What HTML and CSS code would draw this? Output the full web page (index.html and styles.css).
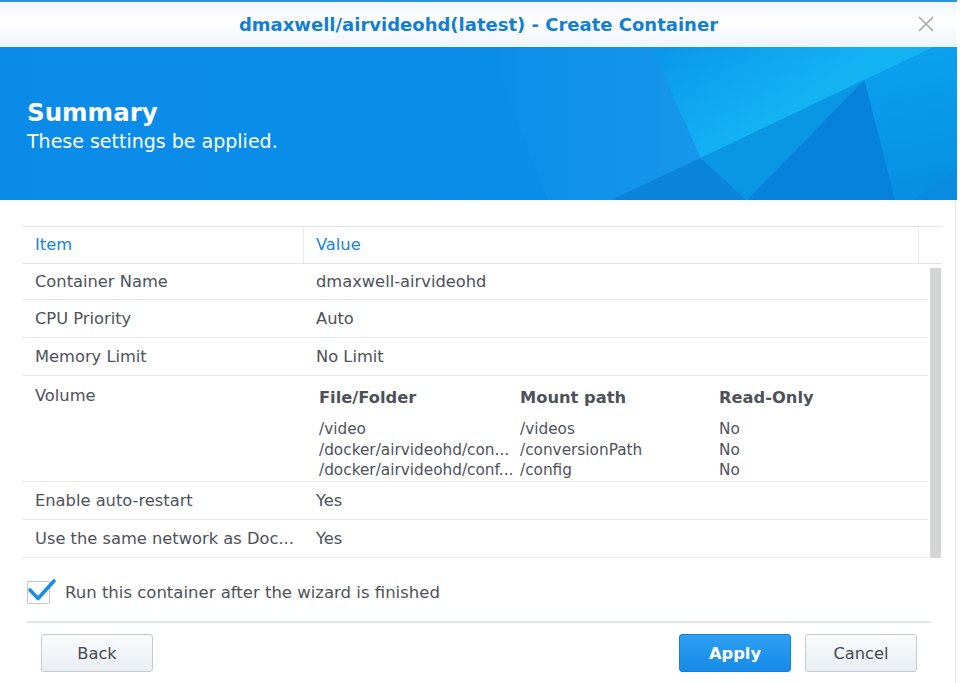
FILE: index.html
```html
<!DOCTYPE html>
<html lang="en">
<head>
<meta charset="utf-8">
<title>Create Container</title>
<link rel="stylesheet" href="styles.css">
</head>
<body>
<div class="dialog">
  <div class="topline"></div>
  <header class="titlebar">
    <h1 class="title">dmaxwell/airvideohd(latest) - Create Container</h1>
    <span class="close" aria-label="Close">
      <svg width="18" height="18" viewBox="0 0 18 18"><path d="M2 2 L16 16 M16 2 L2 16" stroke="#a3a7ab" stroke-width="1.6" fill="none"/></svg>
    </span>
  </header>
  <section class="banner">
    <svg class="banner-bg" viewBox="0 0 960 153" preserveAspectRatio="none">
      <defs>
        <linearGradient id="gBase" x1="0" y1="0" x2="1" y2="0">
          <stop offset="0" stop-color="#0a8be8"/>
          <stop offset="0.55" stop-color="#0a8fe9"/>
          <stop offset="1" stop-color="#0b95ea"/>
        </linearGradient>
        <linearGradient id="gCyan" x1="653" y1="0" x2="720" y2="105" gradientUnits="userSpaceOnUse">
          <stop offset="0" stop-color="#0b96ea"/>
          <stop offset="1" stop-color="#13b2f3"/>
        </linearGradient>
        <linearGradient id="gTopR" x1="900" y1="0" x2="930" y2="140" gradientUnits="userSpaceOnUse">
          <stop offset="0" stop-color="#0aa2ee"/>
          <stop offset="1" stop-color="#0890e2"/>
        </linearGradient>
        <linearGradient id="gSheen" x1="0" y1="0" x2="1" y2="0">
          <stop offset="0" stop-color="#ffffff" stop-opacity="0"/>
          <stop offset="1" stop-color="#ffffff" stop-opacity="0.05"/>
        </linearGradient>
      </defs>
      <rect x="0" y="0" width="960" height="153" fill="url(#gBase)"/>
      <polygon points="490,0 653,0 703,111 613,153 550,153" fill="url(#gSheen)"/>
      <polygon points="653,0 937,0 703,111" fill="url(#gCyan)"/>
      <polygon points="937,0 960,0 960,153 898,153 867,33" fill="url(#gTopR)"/>
      <polygon points="703,111 867,33 748,153" fill="#0996e3"/>
      <polygon points="613,153 703,111 748,153" fill="#0a85da"/>
      <polygon points="867,33 750,153 898,153" fill="#0682da"/>
      <polygon points="960,120 960,153 915,153" fill="#0a8add" opacity="0.6"/>
    </svg>
    <div class="banner-text">
      <h2 class="banner-title">Summary</h2>
      <p class="banner-sub">These settings be applied.</p>
    </div>
  </section>
  <main class="content">
    <div class="grid">
      <div class="ghead">
        <div class="hc hc-item">Item</div>
        <div class="hc hc-value">Value</div>
        <div class="hc hc-pad"></div>
      </div>
      <div class="gbody">
        <div class="rows">
          <div class="row row-first"><div class="k">Container Name</div><div class="v">dmaxwell-airvideohd</div></div>
          <div class="row"><div class="k">CPU Priority</div><div class="v">Auto</div></div>
          <div class="row"><div class="k">Memory Limit</div><div class="v">No Limit</div></div>
          <div class="row row-volume">
            <div class="k">Volume</div>
            <div class="vol">
              <div class="vol-head">File/Folder</div>
              <div class="vol-head">Mount path</div>
              <div class="vol-head">Read-Only</div>
              <div class="vol-cell">/video</div>
              <div class="vol-cell">/videos</div>
              <div class="vol-cell">No</div>
              <div class="vol-cell">/docker/airvideohd/con...</div>
              <div class="vol-cell">/conversionPath</div>
              <div class="vol-cell">No</div>
              <div class="vol-cell">/docker/airvideohd/conf...</div>
              <div class="vol-cell">/config</div>
              <div class="vol-cell">No</div>
            </div>
          </div>
          <div class="row"><div class="k">Enable auto-restart</div><div class="v">Yes</div></div>
          <div class="row"><div class="k">Use the same network as Doc...</div><div class="v">Yes</div></div>
        </div>
        <div class="scrollbar"></div>
      </div>
    </div>
    <label class="check">
      <span class="box">
        <svg class="tick" width="30" height="26" viewBox="0 0 30 26"><path d="M3 12 L11 20.5 L27 3" stroke="#1a8ee4" stroke-width="3.6" fill="none" stroke-linecap="round" stroke-linejoin="round"/></svg>
      </span>
      <span class="check-label">Run this container after the wizard is finished</span>
    </label>
    <div class="sep"></div>
    <footer class="buttons">
      <button class="btn">Back</button>
      <span class="spacer"></span>
      <button class="btn btn-primary">Apply</button>
      <button class="btn">Cancel</button>
    </footer>
  </main>
</div>
</body>
</html>
```

FILE: styles.css
```css
* { box-sizing: border-box; }
html, body { margin: 0; padding: 0; background: #ffffff; }
body {
  width: 960px;
  height: 683px;
  overflow: hidden;
  font-family: "DejaVu Sans", Verdana, sans-serif;
  color: #4d525a;
}
.dialog { width: 957px; }
.topline { height: 2px; background: #2a93e6; }
.titlebar {
  height: 45px;
  display: flex;
  align-items: center;
  justify-content: center;
  position: relative;
  background: linear-gradient(#f2f7fc 0%, #ffffff 45%, #edf4fb 100%);
}
.title {
  margin: 0;
  font-size: 18px;
  font-weight: bold;
  color: #127fd3;
}
.close {
  position: absolute;
  right: 22px;
  top: 13px;
  width: 18px;
  height: 18px;
  display: block;
}
.close svg { display: block; }
.banner {
  height: 153px;
  position: relative;
  overflow: hidden;
  background: #0a8de8;
}
.banner-bg {
  position: absolute;
  left: 0; top: 0;
  width: 100%;
  height: 100%;
}
.banner-text {
  position: relative;
  padding: 51px 0 0 27px;
  color: #ffffff;
}
.banner-title {
  margin: 0;
  font-size: 24.5px;
  font-weight: bold;
  line-height: 30px;
}
.banner-sub {
  margin: 0;
  font-size: 19px;
  line-height: 27px;
}
.content {
  padding: 26px 0 0 22px;
  border-right: 1px solid #e4e7ea;
  width: 956px;
  height: 483px;
}
.grid { width: 920px; }
.ghead {
  display: flex;
  height: 38px;
  border-top: 1px solid #e3e6e9;
  border-bottom: 1px solid #e3e6e9;
}
.hc {
  color: #1786d8;
  font-size: 16.3px;
  line-height: 36px;
}
.hc-item { width: 282px; padding-left: 13px; border-right: 1px solid #e8eaed; }
.hc-value { width: 615px; padding-left: 12px; border-right: 1px solid #e8eaed; }
.hc-pad { flex: 1; }
.gbody { display: flex; align-items: flex-start; gap: 2px; }
.rows { width: 906px; }
.row {
  display: flex;
  align-items: center;
  height: 38px;
  border-bottom: 1px solid #e6e8eb;
  font-size: 16.3px;
}
.row-first { height: 36px; }
.k { width: 282px; padding-left: 13px; white-space: nowrap; }
.v { padding-left: 12px; }
.row-volume {
  height: 106px;
  align-items: flex-start;
  padding-top: 9px;
}
.row-volume .k { line-height: 22px; }
.vol {
  margin-left: 15px;
  padding-top: 1px;
  display: grid;
  grid-template-columns: 201px 199px 150px;
  font-size: 15.3px;
  line-height: 20.5px;
}
.vol-head {
  font-weight: bold;
  font-size: 16.3px;
  line-height: 24px;
  margin-bottom: 9px;
}
.vol-cell { white-space: nowrap; overflow: hidden; }
.scrollbar {
  width: 11px;
  height: 290px;
  margin-top: 4px;
  background: #d4d5d6;
}
.check {
  display: flex;
  align-items: center;
  margin: 23px 0 0 5px;
  height: 23px;
}
.box {
  position: relative;
  width: 23px;
  height: 23px;
  border: 1px solid #bfc5cc;
  border-radius: 2px;
  background: #ffffff;
}
.tick {
  position: absolute;
  left: -1px;
  top: -4px;
}
.check-label {
  margin-left: 15px;
  font-size: 16.5px;
  color: #4d525a;
}
.sep {
  margin: 17px 0 0 5px;
  width: 904px;
  height: 2px;
  background: #e2e5e8;
}
.buttons {
  display: flex;
  margin: 11px 0 0 19px;
  width: 876px;
  gap: 14px;
}
.spacer { flex: 1; }
.btn {
  width: 112px;
  height: 38px;
  font-family: "DejaVu Sans", Verdana, sans-serif;
  font-size: 16.3px;
  color: #444a52;
  background: linear-gradient(#fafcfd, #e9eef3);
  border: 1px solid #c3cad2;
  border-radius: 3px;
  padding: 0;
}
.btn-primary {
  color: #ffffff;
  font-weight: bold;
  background: linear-gradient(#2ea0f4, #168ae6);
  border: 1px solid #1780d6;
}
```
